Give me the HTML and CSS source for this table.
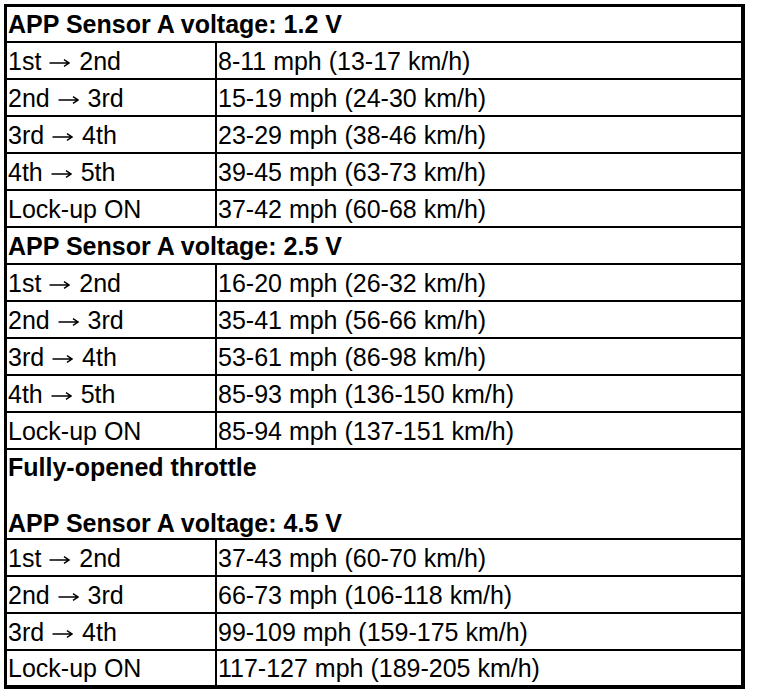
FILE: index.html
```html
<!DOCTYPE html>
<html>
<head>
<meta charset="utf-8">
<link rel="stylesheet" href="styles.css">
</head>
<body>
<svg class="defs" width="0" height="0" aria-hidden="true">
  <symbol id="arrow" viewBox="0 0 21 10"><path d="M0.5 5H20M15 1.6L20 5L15 8.4" fill="none" stroke="#000" stroke-width="1.4" stroke-linejoin="miter"/></symbol>
</svg>
<table class="shift">
  <colgroup><col class="col1"><col class="col2"></colgroup>
  <tr><td class="head" colspan="2">APP Sensor A voltage: 1.2 V</td></tr>
  <tr><td class="c1">1st <svg class="arr" role="img" aria-label="→"><use href="#arrow"/></svg> 2nd</td><td class="c2">8-11 mph (13-17 km/h)</td></tr>
  <tr><td class="c1">2nd <svg class="arr" role="img" aria-label="→"><use href="#arrow"/></svg> 3rd</td><td class="c2">15-19 mph (24-30 km/h)</td></tr>
  <tr><td class="c1">3rd <svg class="arr" role="img" aria-label="→"><use href="#arrow"/></svg> 4th</td><td class="c2">23-29 mph (38-46 km/h)</td></tr>
  <tr><td class="c1">4th <svg class="arr" role="img" aria-label="→"><use href="#arrow"/></svg> 5th</td><td class="c2">39-45 mph (63-73 km/h)</td></tr>
  <tr><td class="c1">Lock-up ON</td><td class="c2">37-42 mph (60-68 km/h)</td></tr>
  <tr><td class="head" colspan="2">APP Sensor A voltage: 2.5 V</td></tr>
  <tr><td class="c1">1st <svg class="arr" role="img" aria-label="→"><use href="#arrow"/></svg> 2nd</td><td class="c2">16-20 mph (26-32 km/h)</td></tr>
  <tr><td class="c1">2nd <svg class="arr" role="img" aria-label="→"><use href="#arrow"/></svg> 3rd</td><td class="c2">35-41 mph (56-66 km/h)</td></tr>
  <tr><td class="c1">3rd <svg class="arr" role="img" aria-label="→"><use href="#arrow"/></svg> 4th</td><td class="c2">53-61 mph (86-98 km/h)</td></tr>
  <tr><td class="c1">4th <svg class="arr" role="img" aria-label="→"><use href="#arrow"/></svg> 5th</td><td class="c2">85-93 mph (136-150 km/h)</td></tr>
  <tr><td class="c1">Lock-up ON</td><td class="c2">85-94 mph (137-151 km/h)</td></tr>
  <tr><td class="head big" colspan="2">Fully-opened throttle<br><br>APP Sensor A voltage: 4.5 V</td></tr>
  <tr><td class="c1">1st <svg class="arr" role="img" aria-label="→"><use href="#arrow"/></svg> 2nd</td><td class="c2">37-43 mph (60-70 km/h)</td></tr>
  <tr><td class="c1">2nd <svg class="arr" role="img" aria-label="→"><use href="#arrow"/></svg> 3rd</td><td class="c2">66-73 mph (106-118 km/h)</td></tr>
  <tr><td class="c1">3rd <svg class="arr" role="img" aria-label="→"><use href="#arrow"/></svg> 4th</td><td class="c2">99-109 mph (159-175 km/h)</td></tr>
  <tr class="last"><td class="c1">Lock-up ON</td><td class="c2">117-127 mph (189-205 km/h)</td></tr>
</table>
</body>
</html>
```
FILE: styles.css
```css
html, body {
  margin: 0;
  padding: 0;
  background: #fff;
}
body {
  padding: 4px;
}
.defs {
  position: absolute;
  width: 0;
  height: 0;
  overflow: hidden;
}
.shift {
  width: 741px;
  border-collapse: separate;
  border-spacing: 0;
  border-style: solid;
  border-color: #000;
  border-width: 3px 4px 4px 3px;
  font-family: "Liberation Sans", Arial, sans-serif;
  font-size: 25px;
  color: #000;
  table-layout: fixed;
}
.col1 {
  width: 210px;
}
.shift td {
  box-sizing: border-box;
  height: 37px;
  padding: 0 0 0 1px;
  line-height: 28px;
  border-bottom: 2px solid #000;
  vertical-align: middle;
  white-space: nowrap;
}
.shift .c1 {
  border-right: 2px solid #000;
}
.shift .head {
  font-weight: bold;
}
.shift tr:first-child .head {
  height: 36px;
}
.shift .big {
  height: 90px;
  padding-top: 2px;
}
.shift .last td {
  border-bottom: 0;
  height: 34px;
}
.arr {
  width: 21px;
  height: 10px;
  margin: 0 2px 0 1px;
  vertical-align: 2px;
}
```
